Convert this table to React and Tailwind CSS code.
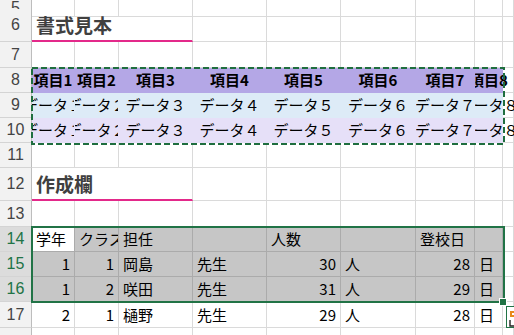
const COLS = 'grid grid-cols-[32px_43px_44px_74px_74px_74px_75px_59px_28px_1fr]';
const FONT = { fontFamily: '"Noto Sans CJK JP", "Noto Sans", sans-serif' };

const JUSTIFY = {
  left: 'justify-start pl-[4px]',
  center: 'justify-center',
  right: 'justify-end pr-[4px]',
};

function Cell({ children, align = 'left', bold = false, bg = '', line = 'border-[#dadada]', spill = false }) {
  return (
    <div
      className={`flex items-center whitespace-nowrap border-r border-b text-[15px] leading-none text-black ${line} ${bg} ${JUSTIFY[align]} ${bold ? 'font-bold' : ''} ${spill ? 'overflow-visible [clip-path:inset(0_-40px_0_0)]' : 'overflow-hidden'}`}
    >
      <span className="pb-[1px]">{children}</span>
    </div>
  );
}

function RowHead({ n, selected }) {
  return (
    <div
      className={`flex items-center justify-center border-r border-b border-r-[#bdbdbd] border-b-[#d4d4d4] text-[16px] leading-none ${selected ? 'bg-[#dcdcdc] text-[#217346]' : 'bg-[#f2f2f2] text-[#444]'}`}
      style={{ fontFamily: '"Liberation Sans", Arial, sans-serif' }}
    >
      {n}
    </div>
  );
}

function EmptyRow({ n, h }) {
  return (
    <div className={`${COLS} ${h}`}>
      <RowHead n={n} />
      {Array.from({ length: 9 }).map((_, i) => (
        <Cell key={i} />
      ))}
    </div>
  );
}

function TitleRow({ n, title }) {
  return (
    <div className={`${COLS} h-[33px]`}>
      <RowHead n={n} />
      <div className="col-span-3 flex items-center border-r border-r-[#dadada] border-b-2 border-b-[#e3298a] pl-[4px] pb-[1px]">
        <span className="text-[19px] font-bold leading-none text-[#404040]">{title}</span>
      </div>
      {Array.from({ length: 6 }).map((_, i) => (
        <Cell key={i} />
      ))}
    </div>
  );
}

function SampleRow({ n, bg, bold, items }) {
  return (
    <div className={`${COLS} h-[25px]`}>
      <RowHead n={n} />
      {items.map((t, i) => (
        <Cell key={i} align="center" bold={bold} bg={bg} line="border-transparent" spill={i === 7}>
          {t}
        </Cell>
      ))}
      <Cell />
    </div>
  );
}

const headers = ['項目1', '項目2', '項目3', '項目4', '項目5', '項目6', '項目7', '項目8'];
const datas = ['データ１', 'データ２', 'データ３', 'データ４', 'データ５', 'データ６', 'データ７', 'データ８'];

const roster = [
  { n: 15, grade: 1, cls: 1, name: '岡島', count: 30, day: 28, sel: true },
  { n: 16, grade: 1, cls: 2, name: '咲田', count: 31, day: 29, sel: true },
  { n: 17, grade: 2, cls: 1, name: '樋野', count: 29, day: 28, sel: false },
  { n: 18, grade: 2, cls: 2, name: '上田', count: 30, day: 28, sel: false },
];

function RosterRow({ r }) {
  const bg = r.sel ? 'bg-[#c6c6c6]' : '';
  const line = r.sel ? 'border-[#ababab]' : 'border-[#dadada]';
  return (
    <div className={`${COLS} ${r.n === 17 ? 'h-[26px]' : r.n === 18 ? 'h-[30px]' : 'h-[25px]'}`}>
      <RowHead n={r.n} selected={r.sel} />
      <Cell align="right" bg={bg} line={line}>{r.grade}</Cell>
      <Cell align="right" bg={bg} line={line}>{r.cls}</Cell>
      <Cell bg={bg} line={line}>{r.name}</Cell>
      <Cell bg={bg} line={line}>先生</Cell>
      <Cell align="right" bg={bg} line={line}>{r.count}</Cell>
      <Cell bg={bg} line={line}>人</Cell>
      <Cell align="right" bg={bg} line={line}>{r.day}</Cell>
      <Cell bg={bg} line={line}>日</Cell>
      <Cell />
    </div>
  );
}

export default function App() {
  const sel = 'bg-[#c6c6c6]';
  const selLine = 'border-[#ababab]';
  return (
    <div className="relative h-[335px] w-[514px] overflow-hidden bg-white" style={FONT}>
      {/* sheet */}
      <div className="flex flex-col">
        <EmptyRow n={5} h="h-[9px]" />
        <TitleRow n={6} title="書式見本" />
        <EmptyRow n={7} h="h-[26px]" />
        <SampleRow n={8} bg="bg-[#b4a7e6]" bold items={headers} />
        <SampleRow n={9} bg="bg-[#ddebf7]" items={datas} />
        <SampleRow n={10} bg="bg-[#e6e0f8]" items={datas} />
        <EmptyRow n={11} h="h-[25px]" />
        <TitleRow n={12} title="作成欄" />
        <EmptyRow n={13} h="h-[26px]" />
        <div className={`${COLS} h-[25px]`}>
          <RowHead n={14} selected />
          <Cell line={selLine}>学年</Cell>
          <Cell bg={sel} line={selLine}>クラス</Cell>
          <Cell bg={sel} line={selLine}>担任</Cell>
          <Cell bg={sel} line={selLine} />
          <Cell bg={sel} line={selLine}>人数</Cell>
          <Cell bg={sel} line={selLine} />
          <Cell bg={sel} line={selLine}>登校日</Cell>
          <Cell bg={sel} line={selLine} />
          <Cell />
        </div>
        {roster.map((r) => (
          <RosterRow key={r.n} r={r} />
        ))}
      </div>

      {/* copy marquee around the sample table */}
      <svg className="absolute left-[31px] top-[67px]" width="474" height="78">
        <rect x="1" y="1" width="472" height="76" fill="none" stroke="#1f6e3f" strokeWidth="2" strokeDasharray="6 3" />
      </svg>

      {/* selection frame */}
      <div className="absolute left-[31px] top-[226px] h-[77px] w-[474px] border-2 border-[#217346]" />
      <div className="absolute left-[499px] top-[298px] h-[8px] w-[8px] border border-white bg-[#217346]" />

      {/* quick analysis button */}
      <div className="absolute left-[506px] top-[306px] h-[22px] w-[22px] border border-[#217346] bg-white">
        <svg width="20" height="20" viewBox="0 0 20 20">
          <path d="M3 4h5v2H5v2h3v2H3z" fill="#e8891c" />
          <path d="M3 13v6h5" fill="none" stroke="#222" strokeWidth="1.4" />
        </svg>
      </div>
    </div>
  );
}
